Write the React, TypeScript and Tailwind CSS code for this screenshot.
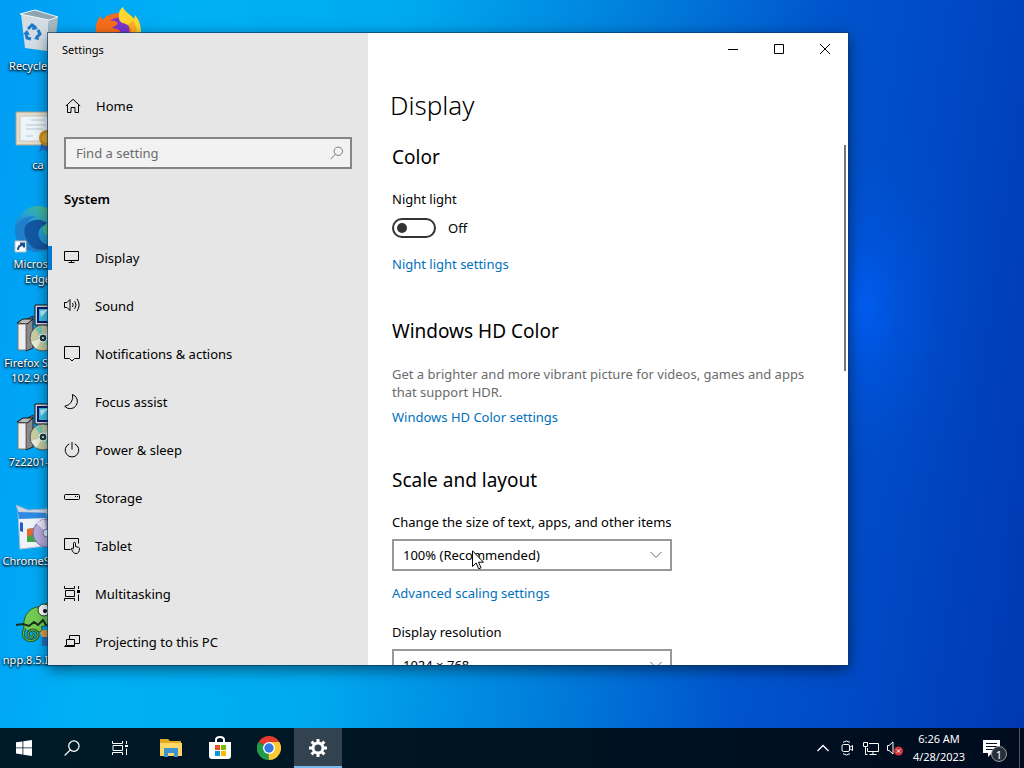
import { useState } from "react";
import type { ReactNode } from "react";

type Item = { label: string; icon: ReactNode };

function Glyph({ children, size = 16 }: { children: ReactNode; size?: number }) {
  return (
    <svg
      width={size}
      height={size}
      viewBox="0 0 16 16"
      fill="none"
      stroke="currentColor"
      strokeWidth="1"
      className="shrink-0"
      aria-hidden
    >
      {children}
    </svg>
  );
}

const navItems: Item[] = [
  {
    label: "Display",
    icon: (
      <Glyph>
        <path d="M.5 1.500h14v9H.5zM7.500 10.500v2M4.500 12.500h6" />
      </Glyph>
    ),
  },
  {
    label: "Sound",
    icon: (
      <Glyph>
        <path d="M.5 4.500H3l3-3v11l-3-3H.5zM8.500 5q1.400 2 0 4M10.700 3.200q2.800 3.800 0 7.600M13 .8q4.200 6.200 0 12.400" />
      </Glyph>
    ),
  },
  {
    label: "Notifications & actions",
    icon: (
      <Glyph>
        <path d="M.5.5h15v12h-5L8 15l-2.500-2.500h-5z" />
      </Glyph>
    ),
  },
  {
    label: "Focus assist",
    icon: (
      <Glyph>
        <path d="M8.500.5a7.300 7.300 0 1 1-7.800 11.800A9.500 9.500 0 0 0 8.500.5z" />
      </Glyph>
    ),
  },
  {
    label: "Power & sleep",
    icon: (
      <Glyph>
        <path d="M5.300 1.900a6.800 6.800 0 1 0 5.400 0M8 0v7.500" />
      </Glyph>
    ),
  },
  {
    label: "Storage",
    icon: (
      <Glyph>
        <rect x=".5" y="4.500" width="15" height="5" rx="1" />
        <path d="M11 6.500h1M13 6.500h1" />
      </Glyph>
    ),
  },
  {
    label: "Tablet",
    icon: (
      <Glyph>
        <path d="M6.500 11.500h-6v-11h14v5" />
        <path d="M9.500 10.500V5.300a1 1 0 0 1 2 0V8.500l3 .8q1 .3 1 1.300c0 2.700-1 4.900-3.500 4.900-2 0-2.900-1.200-3.600-2.600L7.300 10.500q1-1 2.200.6" />
      </Glyph>
    ),
  },
  {
    label: "Multitasking",
    icon: (
      <Glyph>
        <path d="M.5 0v2.500h10V0M.5 15v-2.500h10V15M1.500 4.500h9v6H1.500zM14.500 0v3M14.500 8.500V15" />
        <path d="M13 4h3v3h-3z" fill="currentColor" stroke="none" />
      </Glyph>
    ),
  },
  {
    label: "Projecting to this PC",
    icon: (
      <Glyph>
        <path d="M5.500 5.500v-4h10v8h-5M2.500 5.500h8v6h-8zM2.500 10.500l-2 2h10v-2" />
      </Glyph>
    ),
  },
];

function InstallerIcon() {
  return (
    <svg width="48" height="48" viewBox="0 0 48 48" aria-hidden>
      <path d="M21 1h24v20H21z" fill="#d8dde0" stroke="#111" />
      <path d="M24 4h19v14H24z" fill="#3bc3ea" stroke="#061a6e" strokeWidth="2" />
      <path d="M26 7l9-2-8 8z" fill="#bdf2ff" />
      <path d="M12 16l7-4v32l-7 3z" fill="#8a8a8a" stroke="#222" />
      <path d="M3 19l6-4h10l-6 5z" fill="#b9b9b9" stroke="#111" />
      <path d="M4 20h8v26H4z" fill="#eee" stroke="#777" />
      <circle cx="29" cy="34" r="13" fill="#c9cda1" stroke="#555" />
      <path d="M29 34l-8-9 7-3zM29 34l11 6-5 5z" fill="#75c9ba" />
      <path d="M29 34l-12 4 5 7zM29 34l7-11 5 7z" fill="#e9edda" />
      <circle cx="29" cy="34" r="4" fill="#173e43" stroke="#fff" />
      <circle cx="29" cy="34" r="1" fill="#fff" />
    </svg>
  );
}

const shortcuts: Item[] = [
  {
    label: "Recycle Bin",
    icon: (
      <svg width="48" height="48" viewBox="0 0 48 48" aria-hidden>
        <path d="M7 7l28 5-2 32-22-3z" fill="#d3dde3" />
        <path d="M33 44l8-6 3-27-9 1z" fill="#a9b6bf" />
        <path d="M6 7l15-4 23 7-9 3z" fill="#8fa3b1" stroke="#eef5f8" />
        <g fill="none" stroke="#1f78c8" strokeWidth="3">
          <path d="M14 22l4-4 4 3M24 23l2 4-4 4M17 32l-4-1-1-4" />
        </g>
        <path d="M19 17l5 5-6 1zM25 33l-5-1 4-4zM9 27l4-4 3 5z" fill="#1f78c8" />
      </svg>
    ),
  },
  {
    label: "ca",
    icon: (
      <svg width="48" height="48" viewBox="0 0 48 48" aria-hidden>
        <path d="M2 6h44v33H2z" fill="#e3ddca" stroke="#a8a18d" />
        <path d="M6 10h36v25H6z" fill="#eef5f8" stroke="#c3c9c4" />
        <path d="M17 14h14M12 19h20M12 23h17M12 30h7" stroke="#b7c8d5" />
        <path d="M28 35l-3 11 5-3 3 3 2-9z" fill="#2a66c4" />
        <circle cx="33" cy="32" r="8" fill="#c98e1c" />
        <circle cx="33" cy="32" r="5" fill="#e5aa30" />
      </svg>
    ),
  },
  {
    label: "Microsoft Edge",
    icon: (
      <svg width="48" height="48" viewBox="0 0 48 48" aria-hidden>
        <defs>
          <linearGradient id="edge-rim" x1="0" y1="1" x2="1" y2="0">
            <stop offset="0" stopColor="#1467bd" />
            <stop offset=".5" stopColor="#249fd6" />
            <stop offset="1" stopColor="#5ad06a" />
          </linearGradient>
        </defs>
        <circle cx="24" cy="24" r="23" fill="url(#edge-rim)" />
        <path d="M12 38c-7-9-3-21 9-23 5-1 10 1 13 4-7 1-11 7-9 13 2 7 10 10 19 6-5 7-22 11-32 0z" fill="#1357a3" />
        <path d="M1 24c2-8 11-14 21-12-10 2-15 13-9 23 3 6 8 10 13 12C11 48 0 37 1 24z" fill="#1f7fcd" />
        <path d="M33 18c-4 3-5 8-2 11 4 4 14 2 16-5-1-3-7-8-14-6z" fill="#43c08c" />
        <path d="M1 36h11v11H1z" fill="#fff" stroke="#bbb" />
        <path d="M4 45q0-5 5-5M6 38.500h4v4" fill="none" stroke="#1d4f91" strokeWidth="2" />
      </svg>
    ),
  },
  { label: "Firefox Setup 102.9.0esr", icon: <InstallerIcon /> },
  { label: "7z2201-x64", icon: <InstallerIcon /> },
  {
    label: "ChromeSetup",
    icon: (
      <svg width="48" height="48" viewBox="0 0 48 48" aria-hidden>
        <path d="M2 3l12 5 18-1 13-5-8 10H5z" fill="#c9d8e9" stroke="#9baec9" />
        <path d="M4 10l28 1v33L6 47z" fill="#eef3fa" stroke="#b5bfd2" />
        <path d="M4 10l28 1v5L5 17z" fill="#2d8be4" />
        <path d="M6 20l3 1v9l-3-1z" fill="#2559c8" />
        <path d="M13 27l14-2v15H13z" fill="#3fa648" />
        <path d="M13 27l8-1-1 6-7 3z" fill="#e7672e" />
        <circle cx="33" cy="31" r="14" fill="#b7abdc" stroke="#7770b0" />
        <path d="M33 31L22 21l8-4zM33 31l10 10-8 4z" fill="#ede8fa" />
        <circle cx="33" cy="31" r="4" fill="#e8f2ff" stroke="#7078aa" />
      </svg>
    ),
  },
  {
    label: "npp.8.5.Inst...",
    icon: (
      <svg width="48" height="48" viewBox="0 0 48 48" aria-hidden>
        <path d="M25 29h22v12H30z" fill="#d8a04d" />
        <path d="M28 36h18v9H28z" fill="#2372bd" />
        <path d="M10 28C8 15 16 5 27 6c8-8 19-3 18 8-2 9-12 10-18 12 3 3 0 5-4 5" fill="#75cc54" stroke="#285c2a" />
        <path d="M11 27c-5 10 2 14 9 12 7-3 4-11-2-10-5 1-5 7-1 7 3 0 3-3 1-3" fill="none" stroke="#245d2c" strokeWidth="3" />
        <path d="M11 27c-5 10 2 14 9 12 7-3 4-11-2-10-5 1-5 7-1 7 3 0 3-3 1-3" fill="none" stroke="#70c653" />
        <circle cx="30" cy="9" r="6" fill="#fff" stroke="#173f20" />
        <circle cx="31" cy="10" r="2" fill="#111" />
        <path d="M2 24l7-1 6 2 5-4 4 3 5-5 3 5 9 1" fill="none" stroke="#18311d" strokeWidth="2" />
      </svg>
    ),
  },
  {
    label: "Firefox",
    icon: (
      <svg width="48" height="48" viewBox="0 0 48 48" aria-hidden>
        <circle cx="24" cy="26" r="20" fill="#f36a21" />
        <path d="M14 16c6-7 15-7 21 0v18H16z" fill="#7b36cf" />
        <path d="M2 26C1 19 3 14 6 9l3 4c1-1 3-3 4-5l3 6c4-1 7 0 8 3l-6 4c5 1 8 1 8 4-5 0-7 4-11 3-5-1-8-3-8 1z" fill="#fa6e19" />
        <path d="M25 11C24 5 27 1 29 0c2 6 7 6 11 12l1-4c8 9 8 23-1 31-2-10-1-19-8-22-5-1-7-3-7-6z" fill="#ffd52e" />
        <path d="M38 13c6 8 7 17 2 26-2-10-1-19-8-22 4 0 6-1 6-4z" fill="#ffad27" />
      </svg>
    ),
  },
];

function Desktop() {
  return (
    <ul className="grid w-40 auto-cols-[80px] grid-flow-col grid-rows-[repeat(7,99px)] pt-[7px]">
      {shortcuts.map((s) => (
        <li key={s.label}>
          <button
            type="button"
            className="flex w-[76px] flex-col items-center gap-[3px] text-center text-[11px] leading-[15px] text-white [text-shadow:0_1px_2px_#000,0_1px_3px_#000]"
          >
            {s.icon}
            <span>{s.label}</span>
          </button>
        </li>
      ))}
    </ul>
  );
}

function Sidebar() {
  return (
    <aside className="flex w-80 shrink-0 flex-col overflow-hidden bg-[#e6e6e6]">
      <div className="flex h-[34px] shrink-0 items-center pl-[14px] text-[11px]">Settings</div>
      <a href="#home" className="mt-[15px] flex h-12 shrink-0 items-center gap-[15px] pl-[17px]">
        <Glyph>
          <path d="M.8 8L8 1.300 15.200 8M2.500 6.500v8h3.500v-5h4v5h3.500v-8" />
        </Glyph>
        Home
      </a>
      <div className="mx-4 mt-[7px] flex h-8 shrink-0 items-center border-2 border-[#858585] bg-[#f2f2f2] pr-[6px] pl-[10px]">
        <input
          type="text"
          aria-label="Find a setting"
          placeholder="Find a setting"
          className="h-7 min-w-0 flex-1 bg-transparent outline-none placeholder:text-[#6b6b6b]"
        />
        <span className="text-[#6b6b6b]">
          <Glyph size={14}>
            <circle cx="9.500" cy="6" r="4.800" />
            <path d="M6 9.500L.8 15" />
          </Glyph>
        </span>
      </div>
      <h2 className="mt-5 shrink-0 pl-4 font-semibold">System</h2>
      <nav className="mt-[25px]">
        {navItems.map((item, i) => (
          <a key={item.label} href="#settings" className="flex h-12 items-center">
            <span className={i === 0 ? "h-6 w-1 bg-[#0078d4]" : "h-6 w-1"} />
            <span className="flex items-center gap-[15px] pl-3">
              {item.icon}
              {item.label}
            </span>
          </a>
        ))}
      </nav>
    </aside>
  );
}

function SelectBox({ id, value }: { id: string; value: string }) {
  return (
    <div className="mt-[7px] grid w-[280px] items-center">
      <select
        id={id}
        defaultValue={value}
        className="col-start-1 row-start-1 h-8 appearance-none border-2 border-[#999] bg-white pr-8 pl-[9px] outline-none"
      >
        <option>{value}</option>
      </select>
      <svg
        width="12"
        height="8"
        viewBox="0 0 12 8"
        fill="none"
        stroke="#666"
        className="pointer-events-none col-start-1 row-start-1 mr-[10px] justify-self-end"
        aria-hidden
      >
        <path d="M.5 1L6 6.500 11.500 1" />
      </svg>
    </div>
  );
}

function DisplayPage() {
  const [night, setNight] = useState(false);
  return (
    <main className="flex min-w-0 flex-1 flex-col bg-white">
      <div className="flex h-8 shrink-0 justify-end">
        <button type="button" aria-label="Minimize" className="grid w-[46px] place-items-center">
          <svg width="10" height="10" viewBox="0 0 10 10" stroke="#000">
            <path d="M0 5.500h10" />
          </svg>
        </button>
        <button type="button" aria-label="Maximize" className="grid w-[46px] place-items-center">
          <svg width="10" height="10" viewBox="0 0 10 10" stroke="#000" fill="none">
            <path d="M.5.5h9v9h-9z" />
          </svg>
        </button>
        <button type="button" aria-label="Close" className="grid w-[46px] place-items-center">
          <svg width="10" height="10" viewBox="0 0 10 10" stroke="#000">
            <path d="M0 0l10 10M10 0L0 10" />
          </svg>
        </button>
      </div>
      <h1 className="mt-[22px] shrink-0 pl-[22px] text-[26px] leading-9 font-light">Display</h1>
      <div className="mt-5 flex min-h-0 flex-1 overflow-hidden pr-[2px] pl-6">
        <div className="min-w-0 flex-1">
          <section>
            <h2 className="text-[19px] leading-7">Color</h2>
            <p id="night" className="mt-[18px]">
              Night light
            </p>
            <label className="mt-2 flex h-[22px] items-center gap-3">
              <input
                type="checkbox"
                role="switch"
                aria-labelledby="night"
                checked={night}
                onChange={(e) => setNight(e.target.checked)}
                className="peer sr-only"
              />
              <span className="flex h-5 w-11 items-center rounded-full border-2 border-[#333] px-[3px] peer-checked:justify-end">
                <span className="size-[10px] rounded-full bg-[#333]" />
              </span>
              <span>{night ? "On" : "Off"}</span>
            </label>
            <a href="#night-light" className="mt-[15px] block text-[#0070bc]">
              Night light settings
            </a>
          </section>
          <section className="mt-[43px]">
            <h2 className="text-[19px] leading-7">Windows HD Color</h2>
            <p className="mt-5 pr-6 leading-[18px] text-[#6b6b6b]">
              Get a brighter and more vibrant picture for videos, games and apps that support HDR.
            </p>
            <a href="#hd-color" className="mt-[6px] block text-[#0070bc]">
              Windows HD Color settings
            </a>
          </section>
          <section className="mt-[39px]">
            <h2 className="text-[19px] leading-7">Scale and layout</h2>
            <label htmlFor="scale" className="mt-[18px] block">
              Change the size of text, apps, and other items
            </label>
            <SelectBox id="scale" value="100% (Recommended)" />
            <a href="#scaling" className="mt-3 block text-[#0070bc]">
              Advanced scaling settings
            </a>
            <label htmlFor="resolution" className="mt-[19px] block">
              Display resolution
            </label>
            <SelectBox id="resolution" value="1024 × 768" />
          </section>
        </div>
        <div className="mt-[2px] h-[226px] w-[2px] bg-[#767676]" />
      </div>
    </main>
  );
}

const pinned: Item[] = [
  {
    label: "File Explorer",
    icon: (
      <svg width="24" height="24" viewBox="0 0 24 24" aria-hidden>
        <path d="M1 3h8l2 2h11v15H1z" fill="#e5a823" />
        <path d="M1 7h22v13H1z" fill="#ffd766" />
        <path d="M5 12h14v9h-4v-4H9v4H5z" fill="#3f92d2" />
      </svg>
    ),
  },
  {
    label: "Microsoft Store",
    icon: (
      <svg width="24" height="24" viewBox="0 0 24 24" aria-hidden>
        <path d="M8 7V4q0-3 4-3t4 3v3" fill="none" stroke="#fff" strokeWidth="2" />
        <path d="M1 6h22v14q0 3-3 3H4q-3 0-3-3z" fill="#fff" />
        <path d="M7 9h5v5H7z" fill="#e5522b" />
        <path d="M13 9h5v5h-5z" fill="#7fba00" />
        <path d="M7 15h5v5H7z" fill="#0099e5" />
        <path d="M13 15h5v5h-5z" fill="#ffb900" />
      </svg>
    ),
  },
  {
    label: "Google Chrome",
    icon: (
      <svg width="24" height="24" viewBox="0 0 24 24" aria-hidden>
        <path d="M12 12L1.600 6A12 12 0 0 1 22.400 6z" fill="#e33b2e" />
        <path d="M12 12L1.600 6A12 12 0 0 0 12 24z" fill="#229b4b" />
        <path d="M12 12h-1l1 12A12 12 0 0 0 22.400 6H12z" fill="#fcc934" />
        <path d="M1.600 6L7 15l5 3-3.500 5.500A12 12 0 0 1 1.600 6z" fill="#229b4b" />
        <circle cx="12" cy="12" r="6" fill="#fff" />
        <circle cx="12" cy="12" r="4.700" fill="#3478e5" />
      </svg>
    ),
  },
];

function Taskbar() {
  return (
    <footer className="flex h-10 shrink-0 bg-linear-to-r from-[#001a28] via-[#001421] to-[#000b20] text-white">
      <button type="button" aria-label="Start" className="grid w-12 place-items-center">
        <svg width="16" height="16" viewBox="0 0 16 16" fill="#fff">
          <path d="M0 2.300L6.500 1.400v6.100H0zM7.300 1.300L16 0v7.500H7.300zM0 8.300h6.500v6.200L0 13.600zM7.300 8.300H16V16l-8.700-1.300z" />
        </svg>
      </button>
      <button type="button" aria-label="Search" className="grid w-12 place-items-center">
        <svg width="16" height="16" viewBox="0 0 17 17" fill="none" stroke="#fff" strokeWidth="1.300">
          <circle cx="10.500" cy="6.500" r="5.500" />
          <path d="M6.700 10.500L.7 16.500" />
        </svg>
      </button>
      <button type="button" aria-label="Task View" className="grid w-12 place-items-center">
        <Glyph>
          <path d="M.5 1v2.500h10V1M.5 15v-2.500h10V15M1 5.500h9.500v5H1zM14.500 1v3M14.500 8.500V15" />
          <path d="M13 5h3v2h-3z" fill="currentColor" stroke="none" />
        </Glyph>
      </button>
      <div className="ml-[3px] flex gap-px">
        {pinned.map((p) => (
          <button key={p.label} type="button" aria-label={p.label} className="grid w-12 place-items-center">
            {p.icon}
          </button>
        ))}
        <button
          type="button"
          aria-label="Settings"
          className="grid w-12 place-items-center border-b-2 border-[#76b9ed] bg-[#32434f] pt-[2px]"
        >
          <svg width="20" height="20" viewBox="0 0 20 20" fill="none" stroke="#fff">
            <circle cx="10" cy="10" r="5" strokeWidth="3" />
            <path
              d="M10 1v3M10 16v3M1 10h3M16 10h3M3.600 3.600l2.200 2.200M14.200 14.200l2.200 2.200M3.600 16.400l2.200-2.200M14.200 5.800l2.200-2.200"
              strokeWidth="3"
            />
          </svg>
        </button>
      </div>
      <div className="ml-auto flex">
        <button type="button" aria-label="Show hidden icons" className="grid w-6 place-items-center">
          <svg width="12" height="8" viewBox="0 0 12 8" fill="none" stroke="#fff" strokeWidth="1.300">
            <path d="M.5 7L6 1.500 11.500 7" />
          </svg>
        </button>
        <button type="button" aria-label="Meet Now" className="grid w-6 place-items-center">
          <Glyph>
            <rect x="3" y="4.500" width="7.500" height="7" rx="1.500" />
            <path d="M10.500 7.500L13.500 5.500v5L10.500 8.500M4 2.300q3.500-2.500 7 0M4 13.700q3.500 2.500 7 0" />
          </Glyph>
        </button>
        <button type="button" aria-label="Network" className="grid w-6 place-items-center">
          <Glyph>
            <path d="M6 3.500h9.500v8H4.500V8M10 11.500v3M6.500 14.500h7M.5 2.500h4v4h-4zM2.500 6.500v8h2" />
          </Glyph>
        </button>
        <button type="button" aria-label="Volume muted" className="grid w-6 place-items-center">
          <svg width="18" height="16" viewBox="0 0 18 16" fill="none" stroke="#fff">
            <path d="M1.500 5.500H3l4-3.500v12l-4-3.500H1.500z" />
            <circle cx="12.500" cy="11" r="4.500" fill="#d13438" stroke="none" />
            <path d="M10.800 9.300l3.400 3.400M14.200 9.300l-3.400 3.400" />
          </svg>
        </button>
        <button type="button" className="w-16 text-center text-[11px] leading-[18px]">
          6:26 AM
          <br />
          4/28/2023
        </button>
        <button type="button" aria-label="Notifications" className="grid w-12 place-items-center pr-1">
          <span className="relative">
            <svg width="20" height="20" viewBox="0 0 20 20">
              <path d="M0 2h17v13h-8l-4 4v-4H0z" fill="#fff" />
              <path d="M3 5.500h11M3 8.500h11M3 11.500h7" stroke="#001022" />
            </svg>
            <span className="absolute top-2 left-2 grid size-4 place-items-center rounded-full border border-[#999] bg-[#26303a] text-[11px] leading-4">
              1
            </span>
          </span>
        </button>
        <button type="button" aria-label="Show desktop" className="w-[5px] border-l border-[#4b5563]" />
      </div>
    </footer>
  );
}

export default function App() {
  return (
    <div className="flex h-screen flex-col overflow-hidden bg-[#0078d7] font-['Noto_Sans','Open_Sans',sans-serif] text-[13px] leading-5 text-black">
      <div className="relative min-h-0 flex-1 overflow-hidden bg-[radial-gradient(ellipse_130px_220px_at_84%_42%,#005cf0_0%,#0058e880_30%,#0050d828_65%,#0050d800_100%),linear-gradient(98deg,#009cf5_0%,#00b0f5_16%,#00aaf0_36%,#0080dc_56%,#0054cc_74%,#0048c4_86%,#0038b0_100%)]">
        <Desktop />
        <div className="absolute top-[33px] right-[176px] bottom-[63px] left-12 flex overflow-hidden shadow-[0_0_0_1px_#0b3c66aa,0_4px_14px_#0008]">
          <Sidebar />
          <DisplayPage />
        </div>
        <svg
          width="12"
          height="20"
          viewBox="0 0 12 20"
          className="pointer-events-none absolute top-[550px] left-[472px]"
          aria-hidden
        >
          <path d="M.5.8v15.700l3.700-3.500 2.500 5.800 2.300-1-2.500-5.600h5z" fill="#fff" stroke="#000" />
        </svg>
      </div>
      <Taskbar />
    </div>
  );
}
